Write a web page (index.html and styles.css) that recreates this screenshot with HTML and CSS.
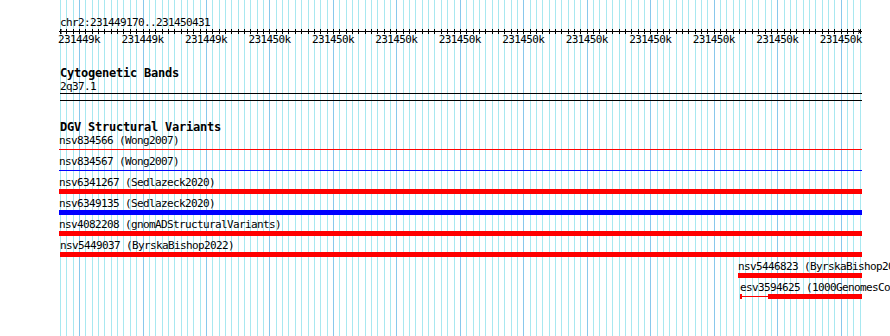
FILE: index.html
```html
<!DOCTYPE html>
<html lang="en">
<head>
    <meta charset="UTF-8">
    <meta name="viewport" content="width=device-width, initial-scale=1.0">
    <title>chr2:231449170..231450431</title>
    <link rel="stylesheet" href="styles.css">
</head>
<body>
    <div class="browser">
        <svg class="grid" id="grid" width="890" height="336" xmlns="http://www.w3.org/2000/svg"></svg>

        <div class="panel">
            <div class="region" id="regionName">chr2:231449170..231450431</div>

            <div class="ruler">
                <svg class="ruler-axis" id="rulerAxis" width="806" height="5" xmlns="http://www.w3.org/2000/svg"></svg>
                <div class="ruler-labels" id="rulerLabels">
                    <!-- tick labels are added here -->
                </div>
            </div>

            <section class="track cyto">
                <h2 class="track-title">Cytogenetic Bands</h2>
                <div class="feature-label">2q37.1</div>
                <div class="band"></div>
            </section>

            <section class="track dgv">
                <h2 class="track-title">DGV Structural Variants</h2>
                <div id="dgvRows">
                    <!-- feature rows are added here -->
                </div>
            </section>
        </div>
    </div>

    <script>
        const region = { chrom: 'chr2', start: 231449170, end: 231450431 };
        const pxPerBp = 0.6347;
        const trackWidth = 802;

        const variants = [
            { name: 'nsv834566', source: 'Wong2007', start: 231300000, end: 231600000, color: 'red', style: 'line' },
            { name: 'nsv834567', source: 'Wong2007', start: 231300000, end: 231600000, color: 'blue', style: 'line' },
            { name: 'nsv6341267', source: 'Sedlazeck2020', start: 231440000, end: 231460000, color: 'red', style: 'box' },
            { name: 'nsv6349135', source: 'Sedlazeck2020', start: 231440000, end: 231460000, color: 'blue', style: 'box' },
            { name: 'nsv4082208', source: 'gnomADStructuralVariants', start: 231445000, end: 231455000, color: 'red', style: 'box' },
            { name: 'nsv5449037', source: 'ByrskaBishop2022', start: 231449170, end: 231455000, color: 'red', style: 'box' },
            { name: 'nsv5446823', source: 'ByrskaBishop2022', start: 231450238, end: 231455000, color: 'red', style: 'box' },
            { name: 'esv3594625', source: '1000GenomesConsortiumPhase3', start: 231450241, thickStart: 231450285, end: 231455000, color: 'red', style: 'box' }
        ];

        function toPx(pos) {
            return (pos - region.start) * pxPerBp;
        }

        function drawGrid() {
            const grid = document.getElementById('grid');
            let lines = '';
            for (let i = 0; i <= 126; i++) {
                const x = 60 + Math.round(i * 6.347) + 0.5;
                const major = (i - 3) % 10 === 0;
                lines += `<line x1="${x}" y1="0" x2="${x}" y2="336" class="${major ? 'major' : 'minor'}"/>`;
            }
            grid.innerHTML = lines;
        }

        function drawRuler() {
            const axis = document.getElementById('rulerAxis');
            let marks = '<line x1="1" y1="2.5" x2="804" y2="2.5"/>';
            for (let i = 0; i <= 126; i++) {
                const x = 2 + Math.round(i * 6.347) + 0.5;
                marks += `<line x1="${x}" y1="0" x2="${x}" y2="5"/>`;
            }
            marks += '<path d="M4 0.5 L1.5 2.5 L4 4.5" class="arrow"/>';
            marks += '<path d="M800 0.5 L802.5 2.5 L800 4.5" class="arrow"/>';
            axis.innerHTML = marks;

            const labels = document.getElementById('rulerLabels');
            labels.innerHTML = '';
            for (let pos = 231449200; pos <= region.end; pos += 100) {
                const span = document.createElement('span');
                span.textContent = `${Math.round(pos / 1000)}k`;
                labels.appendChild(span);
            }
        }

        function drawVariants() {
            const rows = document.getElementById('dgvRows');
            rows.innerHTML = '';

            variants.forEach(({ name, source, start, end, thickStart, color, style }) => {
                let left = Math.round(toPx(start));
                if (left < 0) left = -1;
                const right = Math.min(Math.round(toPx(end)), trackWidth);

                const row = document.createElement('div');
                row.className = 'feature-row';
                row.innerHTML = `
                    <div class="feature" style="margin-left: ${left}px; width: ${right - left}px">
                        <div class="feature-label">${name} (${source})</div>
                        <div class="feature-bar ${color}"></div>
                    </div>
                `;

                const bar = row.querySelector('.feature-bar');
                if (thickStart) {
                    const thin = Math.round(toPx(thickStart)) - left;
                    bar.innerHTML = `
                        <span class="segment-thin" style="width: ${thin}px"></span>
                        <span class="segment-thick"></span>
                    `;
                } else {
                    bar.innerHTML = `<span class="segment-${style === 'line' ? 'line' : 'thick'}"></span>`;
                }
                rows.appendChild(row);
            });
        }

        drawGrid();
        drawRuler();
        drawVariants();
    </script>
</body>
</html>
```

FILE: styles.css
```css
:root {
    --grid-minor: #a8e8f0;
    --grid-major: #88c8ec;
    --red: #ff0000;
    --blue: #0000ff;
    --ink: #000000;
}

html, body {
    margin: 0;
    padding: 0;
    background: #ffffff;
    overflow: hidden;
}

body {
    font-family: "DejaVu Sans Mono", "Liberation Mono", monospace;
    font-size: 11px;
    line-height: 13px;
    letter-spacing: -0.62px;
    color: var(--ink);
}

.browser {
    position: relative;
    width: 890px;
    height: 336px;
    overflow: hidden;
}

/* grid sits under every track */
.grid {
    position: absolute;
    top: 0;
    left: 0;
    z-index: 0;
    shape-rendering: crispEdges;
}

.grid .minor {
    stroke: var(--grid-minor);
    stroke-width: 1;
}

.grid .major {
    stroke: var(--grid-major);
    stroke-width: 1;
}

.panel {
    position: relative;
    z-index: 1;
    width: 802px;
    padding: 16px 0 0 60px;
}

.region {
    height: 13px;
    white-space: nowrap;
}

.ruler-axis {
    display: block;
    margin-left: -2px;
    overflow: visible;
}

.ruler-axis line {
    stroke: var(--ink);
    stroke-width: 1;
    shape-rendering: crispEdges;
}

.ruler-axis .arrow {
    fill: none;
    stroke: var(--ink);
    stroke-width: 1;
}

.ruler-labels {
    display: flex;
    margin-top: -1px;
    margin-left: -12.73px;
    height: 13px;
}

.ruler-labels span {
    flex: 0 0 63.47px;
    text-align: center;
    white-space: nowrap;
}

.track-title {
    margin: 0;
    font-size: 12px;
    font-weight: bold;
    line-height: 13px;
    letter-spacing: -0.22px;
}

.cyto {
    margin-top: 21px;
}

.feature-label {
    height: 13px;
    white-space: nowrap;
}

.band {
    height: 6px;
    border-top: 1px solid var(--ink);
    border-bottom: 1px solid var(--ink);
}

.dgv {
    margin-top: 20px;
}

.feature-row {
    height: 21px;
}

.feature-bar {
    display: flex;
    height: 5px;
}

.feature-bar span {
    display: block;
    height: 5px;
}

.segment-thick {
    flex: 1;
}

.segment-line {
    flex: 1;
}

.segment-thin {
    flex: none;
    box-sizing: border-box;
}

.red .segment-thick { background: var(--red); }
.blue .segment-thick { background: var(--blue); }

.red .segment-line,
.red .segment-thin {
    background: linear-gradient(var(--red), var(--red)) 0 2px / 100% 1px no-repeat;
}

.blue .segment-line {
    background: linear-gradient(var(--blue), var(--blue)) 0 2px / 100% 1px no-repeat;
}

.red .segment-thin {
    border-left: 2px solid var(--red);
}
```
